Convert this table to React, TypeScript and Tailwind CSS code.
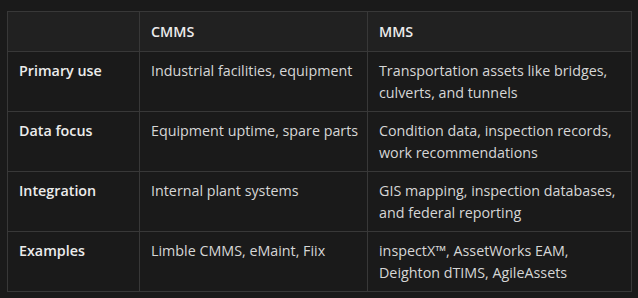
const rows = [
  {
    label: "Primary use",
    cmms: "Industrial facilities, equipment",
    mms: "Transportation assets like bridges, culverts, and tunnels",
  },
  {
    label: "Data focus",
    cmms: "Equipment uptime, spare parts",
    mms: "Condition data, inspection records, work recommendations",
  },
  {
    label: "Integration",
    cmms: "Internal plant systems",
    mms: "GIS mapping, inspection databases, and federal reporting",
  },
  {
    label: "Examples",
    cmms: "Limble CMMS, eMaint, Fiix",
    mms: "inspectX™, AssetWorks EAM, Deighton dTIMS, AgileAssets",
  },
];

export default function App() {
  return (
    <div className="w-[638px] h-[298px] bg-[#1a1a1a] pt-[11px] pl-[7px] font-['Open_Sans',sans-serif] text-[14.3px] leading-[22px]">
      <table className="w-[625px] border-collapse border border-[#383838] table-fixed">
        <colgroup>
          <col className="w-[132px]" />
          <col className="w-[228px]" />
          <col />
        </colgroup>
        <thead>
          <tr className="h-[40px] bg-[#212121]">
            <th className="border border-[#383838]" />
            <th className="border border-[#383838] px-[11px] text-left font-semibold text-[#ececec]">CMMS</th>
            <th className="border border-[#383838] px-[11px] text-left font-semibold text-[#ececec]">MMS</th>
          </tr>
        </thead>
        <tbody>
          {rows.map((r) => (
            <tr key={r.label} className="h-[60px]">
              <td className="border border-[#383838] px-[11px] pt-[8px] pb-[7px] align-top font-semibold text-[#ececec]">{r.label}</td>
              <td className="border border-[#383838] px-[11px] pt-[8px] pb-[7px] align-top whitespace-nowrap text-[#d6d6d6]">{r.cmms}</td>
              <td className="border border-[#383838] px-[11px] pt-[8px] pb-[7px] align-top text-[#d6d6d6]">{r.mms}</td>
            </tr>
          ))}
        </tbody>
      </table>
    </div>
  );
}
